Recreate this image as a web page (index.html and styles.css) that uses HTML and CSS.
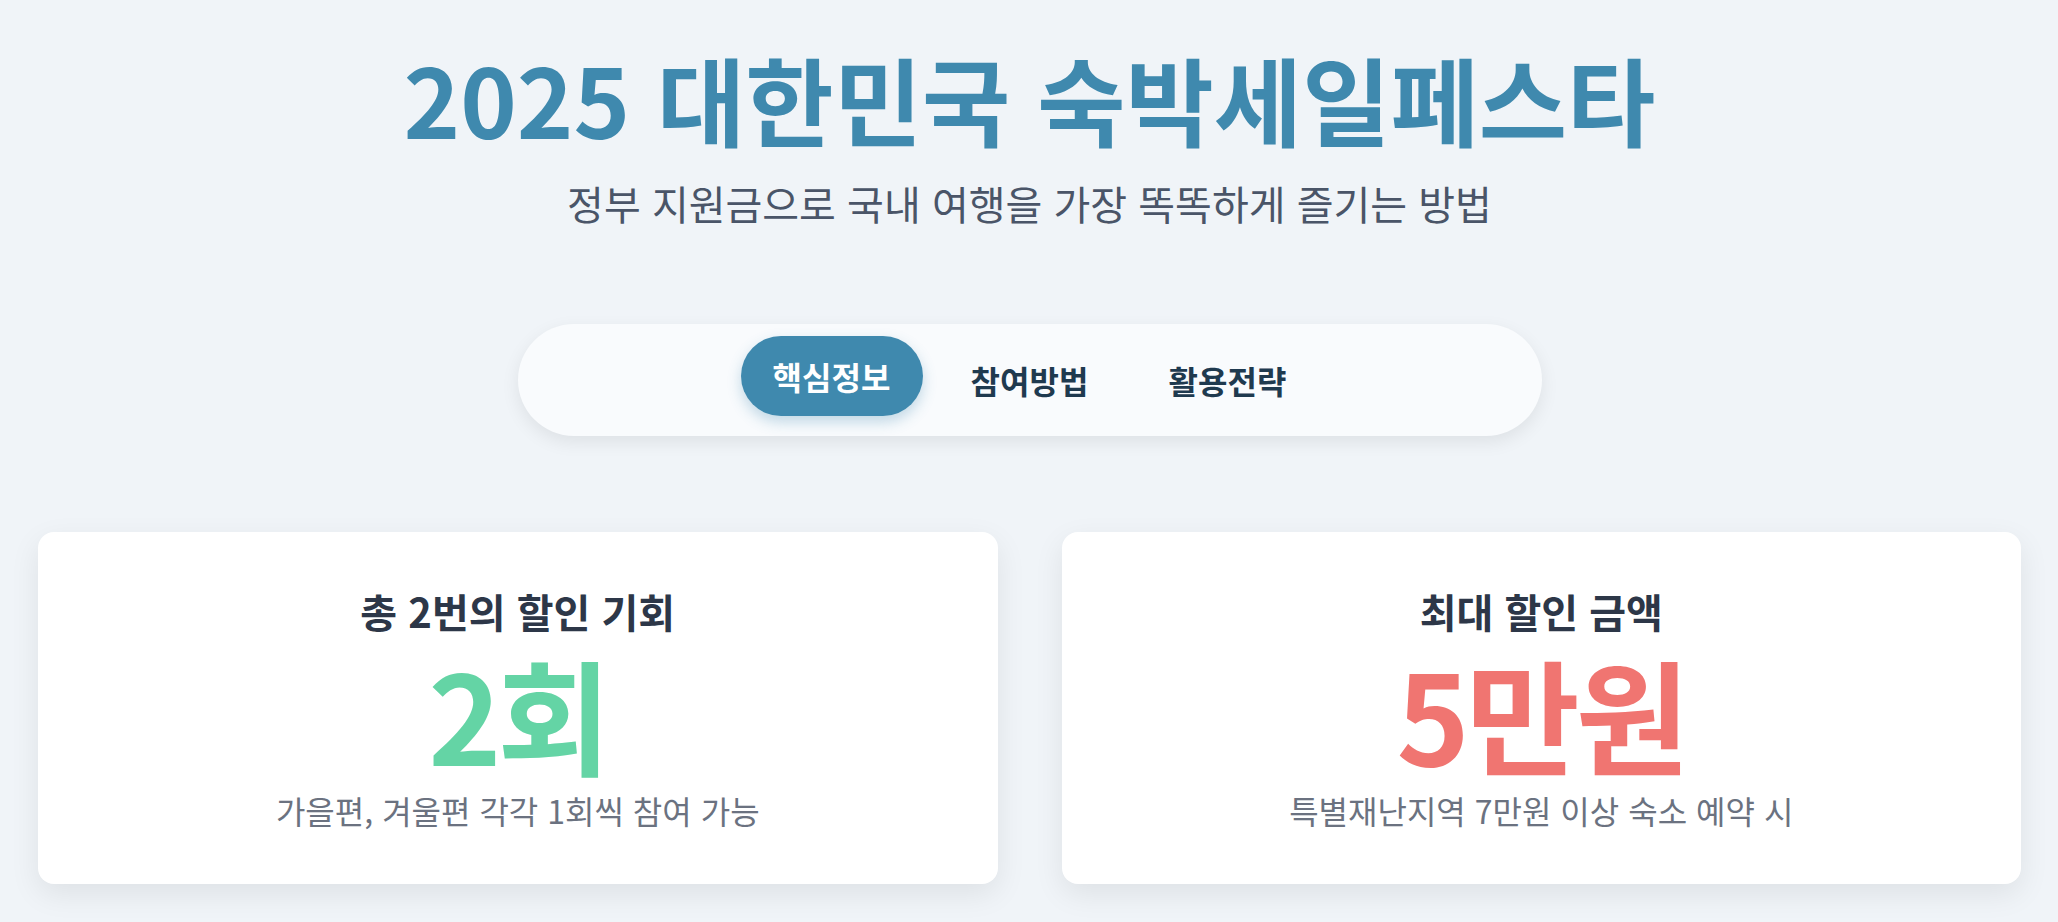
FILE: index.html
```html
<!DOCTYPE html>
<html lang="ko">
<head>
<meta charset="utf-8">
<title>2025 대한민국 숙박세일페스타</title>
<link rel="stylesheet" href="styles.css">
</head>
<body>
<div class="page">
  <header class="hero">
    <h1 class="title">2025 대한민국 숙박세일페스타</h1>
    <p class="subtitle">정부 지원금으로 국내 여행을 가장 똑똑하게 즐기는 방법</p>
  </header>
  <nav class="tabs">
    <button class="tab active">핵심정보</button>
    <button class="tab">참여방법</button>
    <button class="tab">활용전략</button>
  </nav>
  <section class="cards">
    <div class="card">
      <h2 class="card-title">총 2번의 할인 기회</h2>
      <div class="big green">2회</div>
      <p class="card-desc">가을편, 겨울편 각각 1회씩 참여 가능</p>
    </div>
    <div class="card">
      <h2 class="card-title">최대 할인 금액</h2>
      <div class="big red">5만원</div>
      <p class="card-desc">특별재난지역 7만원 이상 숙소 예약 시</p>
    </div>
  </section>
</div>
</body>
</html>
```

FILE: styles.css
```css
* { box-sizing: border-box; }
html, body { margin: 0; padding: 0; }
body {
  background: #f0f4f8;
  font-family: "Noto Sans CJK KR", "Noto Sans", sans-serif;
  color: #2d3748;
}
.page {
  padding: 43px 37px 40px 38px;
}
.hero {
  text-align: center;
}
.title {
  margin: 0;
  font-size: 96px;
  font-weight: 700;
  line-height: 1.15;
  color: #3f89ae;
}
.subtitle {
  margin: 24px 0 0;
  font-size: 40px;
  font-weight: 400;
  line-height: 1.3;
  color: #4a5568;
}
.tabs {
  margin: 95px auto 0;
  width: 1024px;
  height: 112px;
  padding: 16px;
  background: #f9fbfd;
  border-radius: 56px;
  box-shadow: 0 6px 18px rgba(0, 0, 0, 0.08);
  display: flex;
  justify-content: center;
  align-items: center;
  gap: 16px;
}
.tab {
  border: none;
  background: transparent;
  font-family: inherit;
  font-size: 32px;
  font-weight: 700;
  color: #1f3a4f;
  height: 80px;
  width: 182px;
  border-radius: 40px;
  padding: 0;
  cursor: pointer;
}
.tab.active {
  background: #3f89ae;
  color: #ffffff;
  transform: translateY(-4px);
  box-shadow: 0 6px 14px rgba(63, 137, 174, 0.3);
}
.cards {
  margin-top: 96px;
  display: grid;
  grid-template-columns: 1fr 1fr;
  gap: 64px;
}
.card {
  background: #ffffff;
  border-radius: 16px;
  height: 352px;
  box-shadow: 0 10px 30px rgba(0, 0, 0, 0.08);
  display: flex;
  flex-direction: column;
  align-items: center;
  padding-top: 53px;
}
.card-title {
  margin: 0;
  font-size: 40px;
  font-weight: 700;
  line-height: 1.3;
  color: #2d3748;
}
.big {
  font-size: 124px;
  font-weight: 700;
  line-height: 1;
  letter-spacing: -4px;
  margin-top: 13px;
}
.green { color: #64d4a5; }
.red { color: #f07571; }
.card-desc {
  margin: 16px 0 0;
  font-size: 32px;
  line-height: 1.3;
  color: #6b7280;
}
```
